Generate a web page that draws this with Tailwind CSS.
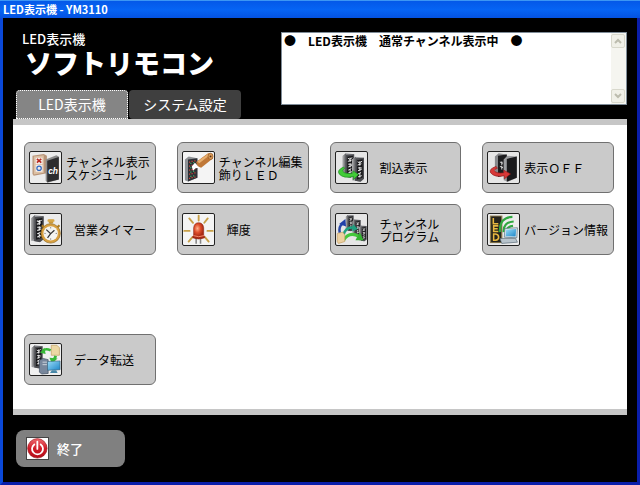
<!DOCTYPE html>
<html lang="ja">
<head>
  <meta charset="UTF-8">
  <meta name="viewport" content="width=device-width, initial-scale=1.0">
  <script src="https://cdn.jsdelivr.net/npm/@tailwindcss/browser@4"></script>
  <title>LED表示機 - YM3110</title>
</head>
<body class="flex min-h-screen flex-col bg-black font-['Noto_Sans_CJK_JP',sans-serif] text-xs">
  <!-- Shared icon parts -->
  <svg class="absolute size-0" aria-hidden="true">
    <defs>
      <linearGradient id="side" x1="0" x2="1" y1="0" y2="0">
        <stop offset="0" stop-color="#b5b5b5"/><stop offset="1" stop-color="#55565a"/>
      </linearGradient>
      <radialGradient id="lamp" cx="40%" cy="35%">
        <stop offset="0" stop-color="#ffb08c"/><stop offset="0.5" stop-color="#e0502c"/><stop offset="1" stop-color="#a82a14"/>
      </radialGradient>
      <linearGradient id="power" x1="0" x2="0" y1="0" y2="1">
        <stop offset="0" stop-color="#ee6a70"/><stop offset="0.5" stop-color="#d01c28"/><stop offset="1" stop-color="#b40c18"/>
      </linearGradient>
      <linearGradient id="screen" x1="0" x2="1" y1="0" y2="1">
        <stop offset="0" stop-color="#9adcf8"/><stop offset="1" stop-color="#1d86c8"/>
      </linearGradient>
      <!-- LED sign board seen from the side -->
      <symbol id="board" viewBox="0 0 40 80">
        <path d="M1 10 12 1 38 4 38 70 27 79 1 74Z" fill="#96979b"/>
        <path d="M1 10 12 1 12 68 1 74Z" fill="url(#side)"/>
        <path d="M12 6 38 4 38 70 27 79 10 76Z" fill="#4b4c50"/>
        <path d="M16 12 34 9 34 66 16 72Z" fill="#18181a"/>
        <path d="M18 17l6 3 8-5M25 15v14M18 27l12-4M19 36h12M25 33v13M19 45l12-5M19 55l10-5M25 52v14M19 64l12-4" stroke="#eee" stroke-width="3" fill="none"/>
      </symbol>
    </defs>
  </svg>

  <header class="h-[18px] border-t border-t-[#3c96f4] bg-linear-to-b from-[#0458e8] via-[#0664f4] to-[#0452e0] px-[3px]">
    <h1 class="text-[11px] leading-4 font-bold text-white">LED表示機 - YM3110</h1>
  </header>

  <main class="flex flex-1 flex-col border-x-[3px] border-b-[3px] border-[#0a1eaa] border-l-[#0a48d8] px-[10px] pb-[15px]">
    <div class="flex justify-between">
      <div>
        <div class="px-[9px] pt-[12px] text-white">
          <p class="text-[13px] leading-[18px] font-medium">LED表示機</p>
          <p class="pl-[3px] text-[27px] leading-[30px] font-black">ソフトリモコン</p>
        </div>
        <nav class="mt-[12px] flex gap-px pl-[3px] text-[14px] text-white">
          <button class="h-[29px] w-28 rounded-t-sm border border-dotted border-white bg-[#858585]">LED表示機</button>
          <button class="h-[29px] w-28 rounded-sm bg-[#3f3f3f]">システム設定</button>
        </nav>
      </div>
      <div class="mt-[14px] flex h-[73px] w-[346px] border border-[#7f8c98] bg-white">
        <textarea readonly aria-label="表示状態" class="flex-1 resize-none overflow-hidden px-[2px] leading-[15px] font-bold text-black outline-none">●　LED表示機　通常チャンネル表示中　●</textarea>
        <div class="flex w-[15px] flex-col justify-between bg-[#f5f5f0] py-px pr-px">
          <button disabled aria-label="上へ" class="flex h-[14px] items-center justify-center rounded-xs border border-[#d8d8cc] bg-[#f0f0e8]">
            <svg class="size-2" viewBox="0 0 8 8" fill="none" stroke="#bcbcae" stroke-width="2"><path d="M1 6l3-3 3 3"/></svg>
          </button>
          <button disabled aria-label="下へ" class="flex h-[14px] items-center justify-center rounded-xs border border-[#d8d8cc] bg-[#f0f0e8]">
            <svg class="size-2" viewBox="0 0 8 8" fill="none" stroke="#bcbcae" stroke-width="2"><path d="M1 2l3 3 3-3"/></svg>
          </button>
        </div>
      </div>
    </div>

    <section class="flex-1 border-y-[6px] border-[#c6c6c6] bg-white pt-[17px] pr-[13px] pb-6 pl-[11px] leading-[13px] text-black">
      <div class="grid grid-cols-4 gap-x-[21px] gap-y-[11px]">
        <button class="flex h-[51px] items-center gap-1 rounded-md border border-[#707070] bg-[#cacaca] pl-1 text-left">
          <svg class="size-[33px] shrink-0 rounded-xs border border-[#222] bg-[#ececec]" viewBox="0 0 99 99">
            <path d="M8 12 44 6 54 12 54 68 12 76 8 70Z" fill="#b89478"/>
            <path d="M12 14 44 10 44 66 12 72Z" fill="#dcc0a4"/>
            <path d="M18 18h22v20H18zM18 41h22v22H18z" fill="#f4ece8"/>
            <path d="M22 22l14 12M36 22 22 34" stroke="#b82820" stroke-width="5"/>
            <circle cx="29" cy="52" r="7" fill="none" stroke="#3068c0" stroke-width="4"/>
            <path d="M50 24 84 10 92 14 92 88 56 98 50 92Z" fill="#8c8c8c"/>
            <path d="M55 28 92 16 92 88 55 97Z" fill="#2c2c2e"/>
            <text x="58" y="70" fill="#fff" font-family="Liberation Sans" font-size="27" font-weight="bold" font-style="italic">ch</text>
          </svg>
          <span>チャンネル表示<br>スケジュール</span>
        </button>
        <button class="flex h-[51px] items-center gap-1 rounded-md border border-[#707070] bg-[#cacaca] pl-1 text-left">
          <svg class="size-[33px] shrink-0 rounded-xs border border-[#222] bg-[#f4f4f4]" viewBox="0 0 99 99">
            <path d="M6 24 18 14 46 20 46 82 16 94 6 90Z" fill="#8f9296"/>
            <path d="M16 24 46 20 46 82 16 94Z" fill="#2d3036"/>
            <path d="M21 30v58M29 28v58M38 26v56" stroke="#c84838" stroke-width="4" stroke-dasharray="4 9"/>
            <path d="M25 34v52M34 32v50" stroke="#44a060" stroke-width="4" stroke-dasharray="4 10"/>
            <path d="M28 46 38 34 46 42 54 50 40 52 32 60Z" fill="#fff"/>
            <path d="M42 32 80 4Q95 2 96 20L58 50Q44 48 42 32Z" fill="#c07838"/>
            <path d="M46 30 80 6 88 8 52 36Z" fill="#e8b070"/>
            <ellipse cx="88" cy="14" rx="8" ry="10" fill="#dc9c58" stroke="#885020" stroke-width="2"/>
            <circle cx="88" cy="14" r="3" fill="#553018"/>
          </svg>
          <span>チャンネル編集<br>飾りＬＥＤ</span>
        </button>
        <button class="flex h-[51px] items-center gap-3 rounded-md border border-[#707070] bg-[#cacaca] pl-1 text-left">
          <svg class="size-[33px] shrink-0 rounded-xs border border-[#222] bg-[#e6e6e6]" viewBox="0 0 99 99">
            <use href="#board" x="20" y="2" width="40" height="82"/>
            <use href="#board" x="50" y="14" width="42" height="82"/>
            <path d="M24 48Q2 58 10 70 24 86 56 78L56 88 72 72 54 60 54 67Q30 72 22 62 20 56 28 52Z" fill="#42cc38" stroke="#1b8a20" stroke-width="2"/>
          </svg>
          <span>割込表示</span>
        </button>
        <button class="flex h-[51px] items-center gap-1 rounded-md border border-[#707070] bg-[#cacaca] pl-1 text-left">
          <svg class="size-[33px] shrink-0 rounded-xs border border-[#222] bg-[#e6e6e6]" viewBox="0 0 99 99">
            <path d="M22 14 34 4 60 8 60 72 34 80 22 74Z" fill="#88898c"/>
            <path d="M32 12 60 8 60 72 32 80Z" fill="#1c1c1e"/>
            <path d="M38 32l10 4M44 30v12M38 46l10 4M44 44v12" stroke="#ddd" stroke-width="3"/>
            <path d="M50 24 62 12 92 14 92 82 64 95 50 90Z" fill="#9c9da0"/>
            <path d="M60 22 92 14 92 82 60 95Z" fill="#1a1a1c"/>
            <path d="M26 46Q2 54 8 66 20 82 52 76L52 86 72 70 50 58 51 66Q28 70 20 60 20 54 30 52Z" fill="#d83838" stroke="#8c1818" stroke-width="2"/>
          </svg>
          <span>表示ＯＦＦ</span>
        </button>
        <button class="flex h-[51px] items-center gap-3 rounded-md border border-[#707070] bg-[#cacaca] pl-1 text-left">
          <svg class="size-[33px] shrink-0 rounded-xs border border-[#222] bg-[#ececec]" viewBox="0 0 99 99">
            <use href="#board" x="2" y="3" width="44" height="88"/>
            <path d="M60 18h14v12H60z" fill="#c89838"/>
            <rect x="56" y="17" width="22" height="8" rx="3" fill="#d8a848"/>
            <path d="M38 36l7 7M94 36l-7 7" stroke="#a87820" stroke-width="7"/>
            <circle cx="66" cy="62" r="31" fill="#d8a040" stroke="#8c6418" stroke-width="2"/>
            <circle cx="66" cy="62" r="23" fill="#f4f4f0"/>
            <path d="M66 42v4M66 78v4M46 62h4M82 62h4" stroke="#777" stroke-width="3"/>
            <path d="M52 50 66 63 78 52M66 63 56 76" stroke="#333" stroke-width="4" fill="none"/>
          </svg>
          <span>営業タイマー</span>
        </button>
        <button class="flex h-[51px] items-center gap-3 rounded-md border border-[#707070] bg-[#cacaca] pl-1 text-left">
          <svg class="size-[33px] shrink-0 rounded-xs border border-[#222] bg-[#f4f4f4]" viewBox="0 0 99 99">
            <path d="M50 5v16M20 14l12 14M79 14 68 28M4 54h17M78 54h17M18 88l12-14M82 88 70 74" stroke="#c8a048" stroke-width="6" stroke-linecap="round"/>
            <path d="M42 74v21M56 74v21" stroke="#888" stroke-width="5"/>
            <path d="M34 68V44Q36 28 50 28 64 28 66 44V68Q70 70 69 76 50 84 31 76 30 70 34 68Z" fill="url(#lamp)" stroke="#902818" stroke-width="2"/>
            <path d="M33 69q17 7 34 0" stroke="#f89070" stroke-width="3" fill="none"/>
          </svg>
          <span>輝度</span>
        </button>
        <button class="flex h-[51px] items-center gap-3 rounded-md border border-[#707070] bg-[#cacaca] pl-1 text-left">
          <svg class="size-[33px] shrink-0 rounded-xs border border-[#222] bg-[#e6e6e6]" viewBox="0 0 99 99">
            <use href="#board" x="30" y="2" width="28" height="54"/>
            <use href="#board" x="52" y="16" width="28" height="56"/>
            <use href="#board" x="73" y="34" width="26" height="56"/>
            <path d="M12 60Q8 40 20 32" stroke="#2848a8" stroke-width="8" fill="none"/>
            <path d="M10 32 30 16 32 40Z" fill="#2040a8"/>
            <path d="M24 66Q32 38 60 44" stroke="#20a080" stroke-width="8" fill="none"/>
            <path d="M54 32 70 48 52 56Z" fill="#20a080"/>
            <path d="M24 84Q42 54 74 72" stroke="#44c83c" stroke-width="10" fill="none"/>
            <path d="M76 58 88 84 62 84Z" fill="#34b430"/>
            <path d="M4 62 22 58 28 66 28 88 8 94 4 88Z" fill="#ecd0a0" stroke="#c09858" stroke-width="2"/>
          </svg>
          <span>チャンネル<br>プログラム</span>
        </button>
        <button class="flex h-[51px] items-center gap-1 rounded-md border border-[#707070] bg-[#cacaca] pl-1 text-left">
          <svg class="size-[33px] shrink-0 rounded-xs border border-[#222] bg-[#ececec]" viewBox="0 0 99 99">
            <rect x="6" y="5" width="40" height="88" fill="#8c7c50"/>
            <rect x="10" y="8" width="32" height="82" fill="#25231c"/>
            <path d="M17 13v18h16M33 38H18v18h15M18 47h13M18 64v20h6q10-2 10-10t-10-10Z" fill="none" stroke="#e8b840" stroke-width="5"/>
            <path d="M38 58Q36 10 78 9M50 58Q48 26 82 24M60 52Q62 40 80 38" stroke="#30a840" stroke-width="7" fill="none"/>
            <path d="M54 46 94 44 92 76 52 74Z" fill="#e0e8ec" stroke="#456070" stroke-width="2"/>
            <path d="M58 50 90 48 88 72 56 71Z" fill="url(#screen)"/>
            <path d="M38 78 88 78 94 90 44 94Z" fill="#b8c4cc" stroke="#50626e" stroke-width="2"/>
          </svg>
          <span>バージョン情報</span>
        </button>
      </div>
      <div class="mt-[79px] grid grid-cols-4 gap-x-[21px]">
        <button class="flex h-[51px] items-center gap-3 rounded-md border border-[#707070] bg-[#cacaca] pl-1 text-left">
          <svg class="size-[33px] shrink-0 rounded-xs border border-[#222] bg-[#f0f0f0]" viewBox="0 0 99 99">
            <use href="#board" x="4" y="3" width="38" height="76"/>
            <path d="M68 4h18l8 8v24H68Z" fill="#ecd8a4" stroke="#b89858" stroke-width="2"/>
            <path d="M40 22Q50 12 66 20" stroke="#38b838" stroke-width="8" fill="none"/>
            <path d="M46 12 32 28 50 32Z" fill="#38b838"/>
            <path d="M82 38Q80 46 76 50" stroke="#38b838" stroke-width="9" fill="none"/>
            <path d="M62 44 88 46 70 62Z" fill="#38b838"/>
            <path d="M30 52 42 46 58 50 58 94 38 96 30 90Z" fill="#78879c" stroke="#3c4858" stroke-width="2"/>
            <path d="M40 58h14M40 66h14" stroke="#d0d8e0" stroke-width="3"/>
            <path d="M56 56 96 54 96 82 56 84Z" fill="url(#screen)" stroke="#38607c" stroke-width="2"/>
            <path d="M70 84h14l4 9H64Z" fill="#4888a8"/>
          </svg>
          <span>データ転送</span>
        </button>
      </div>
    </section>

    <footer class="mt-[15px] pl-[3px]">
      <button class="flex h-[37px] w-[109px] items-center gap-2 rounded-lg bg-[#808080] pl-[10px] text-[13px] font-medium text-white">
        <svg class="size-[23px] border border-[#444] bg-white" viewBox="0 0 69 69">
          <circle cx="34" cy="34" r="32" fill="url(#power)" stroke="#981018" stroke-width="2"/>
          <path d="M24 21a18 18 0 1 0 21 0M34 12v24" fill="none" stroke="#fff" stroke-width="6" stroke-linecap="round"/>
        </svg>
        終了
      </button>
    </footer>
  </main>
</body>
</html>
